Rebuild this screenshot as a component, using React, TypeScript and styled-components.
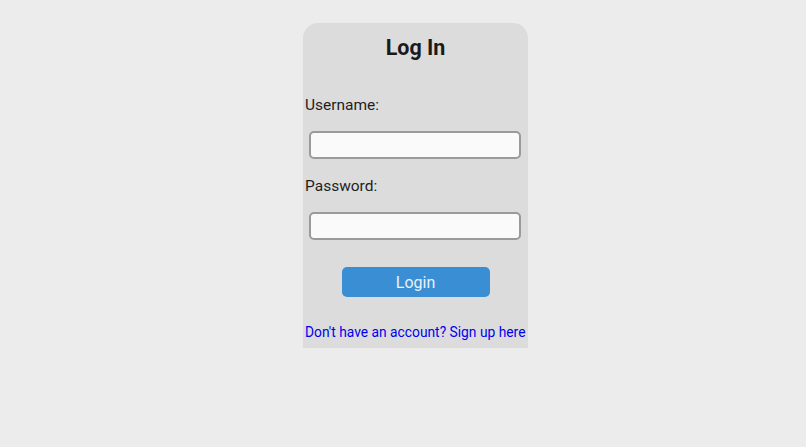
import React from "react";
import styled, { createGlobalStyle } from "styled-components";

const Global = createGlobalStyle`
  html, body { margin: 0; padding: 0; background: #ececec; }
  body { font-family: Roboto, "Noto Sans", "Liberation Sans", sans-serif; color: #1e1e1e; }
`;

const Page = styled.div`
  display: flex;
  justify-content: center;
  padding-top: 23px;
  padding-left: 25px;
`;

const Card = styled.form`
  width: 225px;
  box-sizing: border-box;
  background: #dcdcdc;
  border-radius: 15px 15px 0 0;
  padding: 13px 2px 7px;
  display: flex;
  flex-direction: column;
`;

const Title = styled.h2`
  margin: 0 0 34px;
  font-size: 21.5px;
  line-height: 24px;
  font-weight: 700;
  text-align: center;
  color: #1a1a1a;
`;

const Label = styled.label`
  font-size: 15.5px;
  line-height: 20px;
  padding-top: 1px;
  color: #1e1e1e;
  margin-bottom: 16px;
`;

const Input = styled.input<{ $gap: number }>`
  box-sizing: border-box;
  width: 212px;
  height: 28px;
  margin: 0 0 ${(p) => p.$gap}px 4px;
  border: 2px solid #9a9a9a;
  border-radius: 5px;
  background: #fafafa;
  outline: none;
`;

const Button = styled.button`
  align-self: center;
  width: 148px;
  height: 30px;
  margin: 0 0 26px;
  border: none;
  border-radius: 5px;
  background: #3a8fd4;
  color: #eaf1f9;
  font-family: inherit;
  font-size: 16px;
  cursor: pointer;
`;

const Link = styled.a`
  font-size: 13.8px;
  line-height: 18px;
  color: #0000ee;
  text-decoration: none;
  white-space: nowrap;
`;

export default function App() {
  return (
    <>
      <Global />
      <Page>
        <Card onSubmit={(e) => e.preventDefault()}>
          <Title>Log In</Title>
          <Label htmlFor="u">Username:</Label>
          <Input id="u" type="text" $gap={16} />
          <Label htmlFor="p">Password:</Label>
          <Input id="p" type="password" $gap={27} />
          <Button type="submit">Login</Button>
          <Link href="#">Don't have an account? Sign up here</Link>
        </Card>
      </Page>
    </>
  );
}
